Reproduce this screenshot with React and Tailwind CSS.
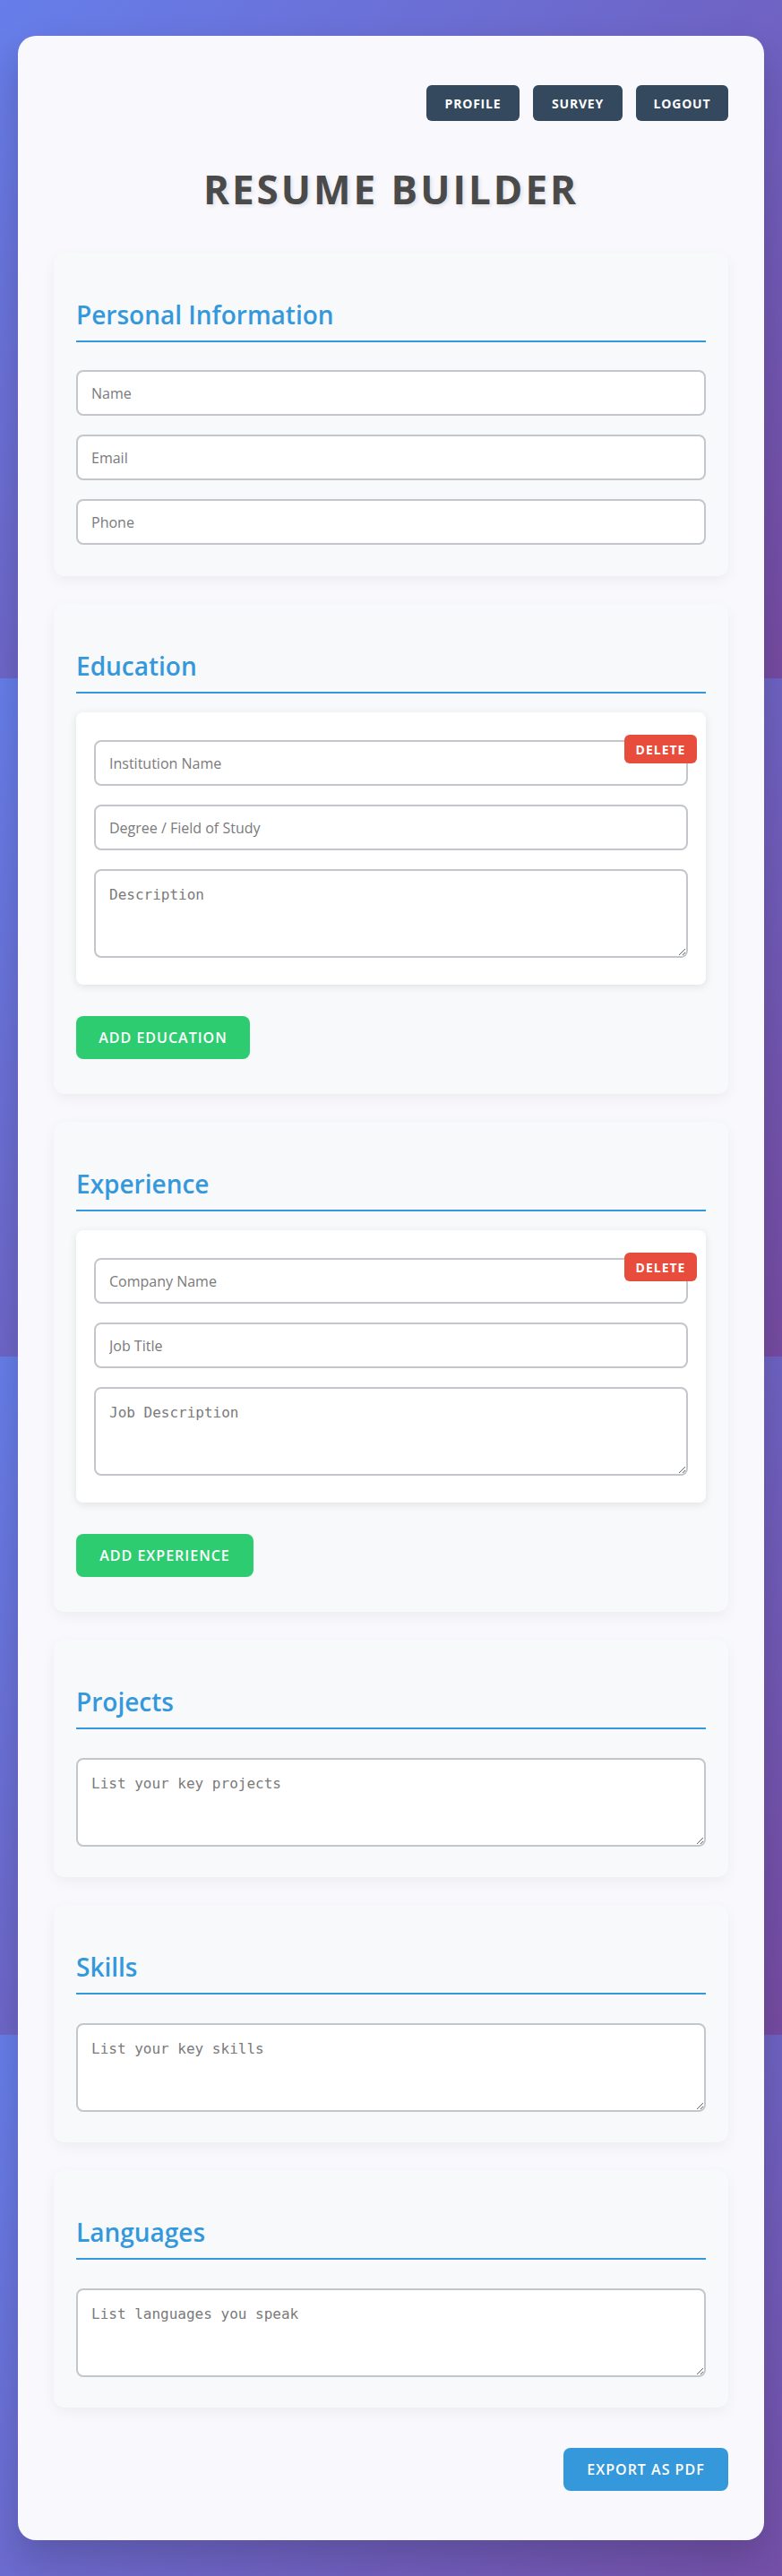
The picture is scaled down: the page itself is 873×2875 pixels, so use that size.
import { useState } from "react";

const inputCls =
    "block w-full h-[51px] px-[15px] bg-white border-2 border-[#c3c7cb] rounded-lg text-[16px] text-[#333] font-['Open_Sans',sans-serif] placeholder:text-[#7a7a7a] outline-none";

const areaCls =
    "block w-full h-[99px] p-[15px] bg-white border-2 border-[#c3c7cb] rounded-lg text-[16px] text-[#333] font-['DejaVu_Sans_Mono',monospace] placeholder:text-[#7a7a7a] outline-none";

const Section = ({ title, pb = "pb-[34px]", children }) => (
    <div className={`bg-[#f8f9fb] rounded-xl px-[25px] pt-[52px] ${pb} shadow-[0_5px_15px_rgba(0,0,0,0.05)]`}>
        <h2 className="text-[28px] leading-[34px] font-semibold text-[#3498db] pb-[12px] border-b-2 border-[#3498db]">
            {title}
        </h2>
        {children}
    </div>
);

const Entry = ({ fields, area }) => (
    <div className="relative mt-[21px] bg-white rounded-lg px-[20px] pt-[31px] pb-[30px] shadow-[0_2px_10px_rgba(0,0,0,0.1)]">
        <div className="flex flex-col gap-[21px]">
            {fields.map((f) => (
                <input key={f} className={inputCls} placeholder={f} />
            ))}
            <textarea className={areaCls} placeholder={area} />
        </div>
        <button className="absolute top-[25px] right-[10px] h-[32px] w-[81px] rounded-md bg-[#e74c3c] text-white text-[14px] font-bold tracking-[1px]">
            DELETE
        </button>
    </div>
);

export default function App() {
    const [edu] = useState([{ id: 1 }]);
    const [exp] = useState([{ id: 1 }]);

    return (
        <div className="min-h-screen px-5 pt-10 pb-10 bg-[linear-gradient(135deg,#667eea_0%,#764ba2_100%)] bg-size-[100%_757px] bg-repeat font-['Open_Sans',sans-serif]">
            <div className="bg-[#f8f8fd] rounded-[20px] px-10 pt-[55px] pb-[55px] shadow-[0_20px_40px_rgba(0,0,0,0.18)]">
                {/* nav */}
                <div className="flex justify-end gap-[15px]">
                    {[
                        ["PROFILE", "w-[104px]"],
                        ["SURVEY", "w-[100px]"],
                        ["LOGOUT", "w-[103px]"],
                    ].map(([b, w]) => (
                        <button
                            key={b}
                            className={`h-10 ${w} rounded-md bg-[#34495e] text-white text-[14px] font-bold tracking-[0.8px]`}
                        >
                            {b}
                        </button>
                    ))}
                </div>

                <h1 className="mt-[46px] text-center text-[44px] leading-[60px] font-bold tracking-[3px] text-[#4a4a4a] [text-shadow:2px_2px_4px_rgba(0,0,0,0.1)]">
                    RESUME BUILDER
                </h1>

                <div className="mt-[41px] flex flex-col gap-[31px]">
                    <Section title="Personal Information" pb="pb-[35px]">
                        <div className="mt-[31px] flex flex-col gap-[21px]">
                            <input className={inputCls} placeholder="Name" />
                            <input className={inputCls} placeholder="Email" />
                            <input className={inputCls} placeholder="Phone" />
                        </div>
                    </Section>

                    <Section title="Education" pb="pb-[39px]">
                        {edu.map((e) => (
                            <Entry key={e.id} fields={["Institution Name", "Degree / Field of Study"]} area="Description" />
                        ))}
                        <button className="mt-[35px] h-[48px] w-[194px] rounded-lg bg-[#2ecc71] text-white text-[16px] font-semibold tracking-[1px]">
                            ADD EDUCATION
                        </button>
                    </Section>

                    <Section title="Experience" pb="pb-[39px]">
                        {exp.map((e) => (
                            <Entry key={e.id} fields={["Company Name", "Job Title"]} area="Job Description" />
                        ))}
                        <button className="mt-[35px] h-[48px] w-[198px] rounded-lg bg-[#2ecc71] text-white text-[16px] font-semibold tracking-[1px]">
                            ADD EXPERIENCE
                        </button>
                    </Section>

                    <Section title="Projects">
                        <textarea className={`${areaCls} mt-[32px]`} placeholder="List your key projects" />
                    </Section>

                    <Section title="Skills">
                        <textarea className={`${areaCls} mt-[32px]`} placeholder="List your key skills" />
                    </Section>

                    <Section title="Languages">
                        <textarea className={`${areaCls} mt-[32px]`} placeholder="List languages you speak" />
                    </Section>
                </div>

                <div className="mt-[45px] flex justify-end">
                    <button className="h-[48px] w-[184px] rounded-lg bg-[#3498db] text-white text-[16px] font-semibold tracking-[1px]">
                        EXPORT AS PDF
                    </button>
                </div>
            </div>
        </div>
    );
}
